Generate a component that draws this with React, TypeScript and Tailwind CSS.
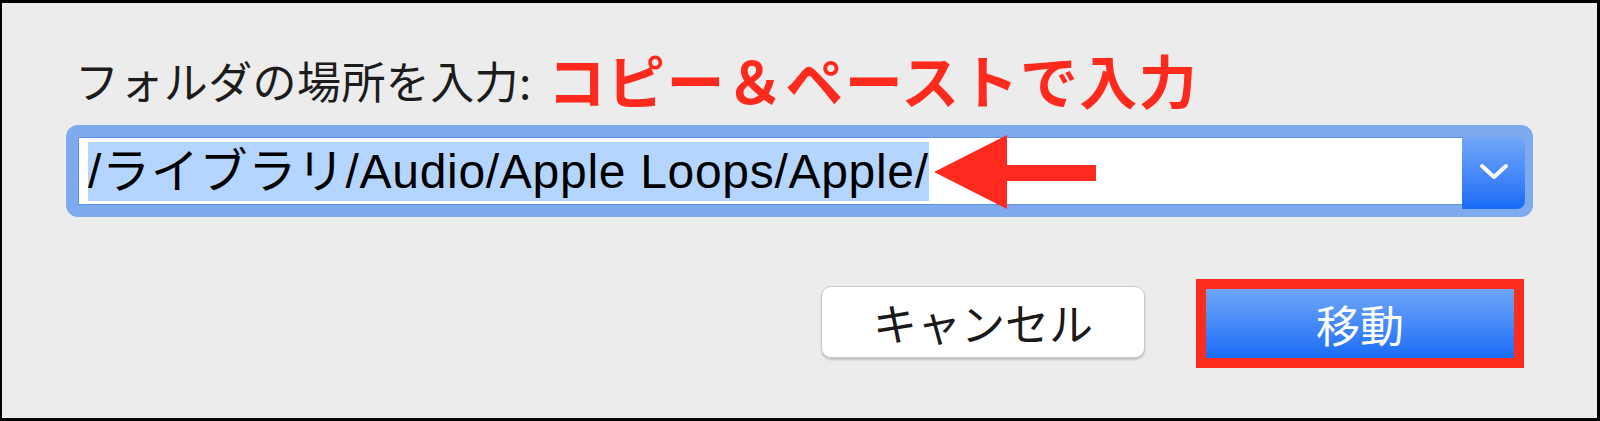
const jp = { fontFamily: '"Noto Sans CJK JP", "Liberation Sans", sans-serif' };

export default function App() {
  return (
    <div className="relative w-[1600px] h-[421px] bg-[#ececec] border-[3px] border-l-2 border-black px-16 overflow-hidden">
      <div className="flex items-start mt-[47px] h-[58px]">
        <span
          className="ml-[9px] mt-[8px] text-[44px] leading-none text-[#1c1c1c] tracking-[0.4px]"
          style={jp}
        >
          フォルダの場所を入力:
        </span>
        <span
          className="ml-[16px] text-[58px] leading-none font-bold text-[#ff2a1e] tracking-[1.4px]"
          style={jp}
        >
          コピー＆ペーストで入力
        </span>
      </div>

      <div className="mt-[17px] h-[92px] rounded-[12px] bg-[#7eaaee] pt-[12px] pl-[12px] pr-[8px] flex items-start">
        <div className="flex-1 h-[68px] bg-white border border-[#5f92e2] border-r-0 pl-[9px] pt-[4px]">
          <span
            className="inline-block h-[59px] bg-[#b4d5fe] text-[48px] leading-[59px] text-black tracking-[0.7px]"
            style={{ fontFamily: '"Liberation Sans", "Noto Sans CJK JP", sans-serif' }}
          >
            /ライブラリ/Audio/Apple Loops/Apple/
          </span>
        </div>
        <div className="w-[63px] h-[72px] rounded-r-[8px] bg-gradient-to-b from-[#72a6f8] to-[#176bf6] flex items-center justify-center">
          <svg width="32" height="20" viewBox="0 0 32 20" className="mt-[-2px]">
            <polyline
              points="4,4 16,15 28,4"
              fill="none"
              stroke="white"
              strokeWidth="4"
              strokeLinecap="round"
              strokeLinejoin="round"
            />
          </svg>
        </div>
      </div>

      <div className="flex justify-end items-start mt-[62px] mr-[9px] gap-[51px]">
        <button
          className="mt-[7px] w-[324px] h-[72px] bg-white rounded-[10px] border border-[#c9c9c9] shadow-[0_2px_2px_rgba(0,0,0,0.18)] text-[44px] leading-none text-[#1a1a1a]"
          style={jp}
        >
          キャンセル
        </button>
        <div className="border-[10px] border-[#fe2b1f]">
          <button
            className="w-[308px] h-[69px] bg-gradient-to-b from-[#6ea6f8] to-[#176bf6] text-[44px] leading-none text-white flex items-center justify-center"
            style={jp}
          >
            移動
          </button>
        </div>
      </div>

      <svg
        className="absolute left-[932px] top-[132px]"
        width="165"
        height="76"
        viewBox="0 0 165 76"
      >
        <polygon points="0,37 73,0 73,74" fill="#fe2a1f" />
        <rect x="72" y="30" width="90" height="16" fill="#fe2a1f" />
      </svg>
    </div>
  );
}
